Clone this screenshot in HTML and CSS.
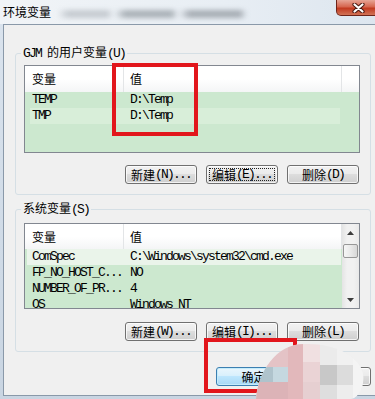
FILE: index.html
```html
<!DOCTYPE html>
<html>
<head>
    <title>环境变量</title>
    <link rel="stylesheet" href="styles.css">
</head>
<body>
    <div class="titlebar">
        <span class="title zh">环境变量</span>
        <div class="title-blur"></div>
        <div class="close">
            <svg width="13" height="10" viewBox="0 0 13 10">
                <path d="M2.5 1.5 L10.5 8.5 M10.5 1.5 L2.5 8.5" stroke="#4a1a12" stroke-width="4.2" stroke-linecap="round"/>
                <path d="M2.5 1.5 L10.5 8.5 M10.5 1.5 L2.5 8.5" stroke="#fff" stroke-width="2.2" stroke-linecap="round"/>
            </svg>
        </div>
    </div>

    <div class="dialog">
        <fieldset class="group group-user">
            <legend>GJM <span class="zh">的用户变量</span>(U)</legend>
            <div class="list list-user">
                <div class="list-main">
                    <div class="list-head">
                        <div class="head-cell cell-name zh">变量</div>
                        <div class="head-cell cell-value zh">值</div>
                        <div class="head-rest"></div>
                    </div>
                    <div class="row"><span class="cell-name">TEMP</span><span class="cell-value">D:\Temp</span></div>
                    <div class="row row-hot"><span class="cell-name">TMP</span><span class="cell-value">D:\Temp</span></div>
                </div>
            </div>
            <div class="btn-row">
                <button class="btn"><span class="zh">新建</span>(N)...</button>
                <button class="btn btn-focus"><span class="zh">编辑</span>(E)...</button>
                <button class="btn"><span class="zh">删除</span>(D)</button>
            </div>
        </fieldset>

        <fieldset class="group group-system">
            <legend><span class="zh">系统变量</span>(S)</legend>
            <div class="list list-system">
                <div class="list-main">
                    <div class="list-head">
                        <div class="head-cell cell-name zh">变量</div>
                        <div class="head-cell cell-value zh">值</div>
                    </div>
                    <div class="row row-light"><span class="cell-name">ComSpec</span><span class="cell-value">C:\Windows\system32\cmd.exe</span></div>
                    <div class="row"><span class="cell-name">FP_NO_HOST_C...</span><span class="cell-value">NO</span></div>
                    <div class="row"><span class="cell-name">NUMBER_OF_PR...</span><span class="cell-value">4</span></div>
                    <div class="row"><span class="cell-name">OS</span><span class="cell-value">Windows_NT</span></div>
                </div>
                <div class="scroll">
                    <div class="arrow">
                        <svg width="7" height="4" viewBox="0 0 7 4"><path d="M0 4 L3.5 0 L7 4 Z" fill="#3c3c3c"/></svg>
                    </div>
                    <div class="thumb"></div>
                    <div class="track"></div>
                    <div class="arrow">
                        <svg width="7" height="4" viewBox="0 0 7 4"><path d="M0 0 L3.5 4 L7 0 Z" fill="#3c3c3c"/></svg>
                    </div>
                </div>
            </div>
            <div class="btn-row">
                <button class="btn"><span class="zh">新建</span>(W)...</button>
                <button class="btn"><span class="zh">编辑</span>(I)...</button>
                <button class="btn"><span class="zh">删除</span>(L)</button>
            </div>
        </fieldset>

        <div class="foot">
            <button class="btn btn-wide btn-default"><span class="zh">确定</span></button>
            <button class="btn btn-wide"><span class="zh">取消</span></button>
        </div>
    </div>

    <div class="mark mark-value"></div>
    <div class="mark mark-ok"></div>

    <svg class="smudge" width="118" height="57" viewBox="0 0 118 57">
        <defs>
            <clipPath id="blob">
                <path d="M4 57 C6 30 24 2 52 2 C82 1 108 14 111 32 C113 48 104 57 98 57 Z"/>
            </clipPath>
        </defs>
        <g clip-path="url(#blob)">
            <rect x="0" y="0" width="118" height="57" fill="#ededed"/>
            <rect x="0" y="0" width="36" height="25" fill="#e4c3c6"/>
            <rect x="5" y="25" width="16" height="15" fill="#afc3cc"/>
            <rect x="21" y="25" width="15" height="15" fill="#c5d8e0"/>
            <rect x="0" y="40" width="36" height="17" fill="#dcb3b7"/>
            <rect x="36" y="0" width="15" height="57" fill="#e2b8bb"/>
            <rect x="51" y="0" width="17" height="20" fill="#f0e0e1"/>
            <rect x="51" y="20" width="17" height="20" fill="#ead3d5"/>
            <rect x="51" y="40" width="17" height="17" fill="#e6cfd1"/>
            <rect x="68" y="0" width="17" height="23" fill="#ebebeb"/>
            <rect x="68" y="23" width="17" height="20" fill="#c8c8c8"/>
            <rect x="68" y="43" width="17" height="14" fill="#dedede"/>
            <rect x="85" y="0" width="16" height="23" fill="#f1f1f1"/>
            <rect x="85" y="23" width="16" height="20" fill="#dcdcdc"/>
            <rect x="101" y="0" width="17" height="57" fill="#f4f4f4"/>
        </g>
    </svg>
</body>
</html>
```

FILE: styles.css
```css
* {
    box-sizing: border-box;
}

body {
    margin: 0;
    width: 375px;
    height: 399px;
    overflow: hidden;
    position: relative;
    background: linear-gradient(#dbe4ee, #c9d5e2);
    font: 13px/14px "Liberation Mono", "Noto Sans CJK SC", monospace;
    letter-spacing: -1.8px;
    color: #000;
}

.zh {
    font-family: "Noto Sans CJK SC", sans-serif;
    font-size: 12px;
    letter-spacing: 0;
}

/* title bar */
.titlebar {
    height: 24px;
    display: flex;
    align-items: flex-start;
    background: linear-gradient(to right, #f1f4f7, #e8eef4 60%, #dde6ef);
}

.title {
    padding: 5px 0 0 3px;
}

.title-blur {
    width: 190px;
    height: 8px;
    margin: 10px 0 0 6px;
    background: linear-gradient(to right, transparent 0, #b5bbc1 6%, #b5bbc1 26%, transparent 30%, #8f979e 36%, #8f979e 60%, transparent 64%, #8c939a 70%, #8c939a 96%, transparent 100%);
    filter: blur(2.5px);
    opacity: .7;
}

.close {
    margin-left: auto;
    margin-right: -5px;
    width: 44px;
    height: 16px;
    border: 1px solid #6e2419;
    border-top: 0;
    border-radius: 0 0 5px 5px;
    background: linear-gradient(#e7a596, #d6664f 45%, #c23a20 55%, #d17356);
    display: flex;
    align-items: center;
    justify-content: center;
}

/* dialog body */
.dialog {
    margin-left: 3px;
    height: 372px;
    border-left: 1px solid #8a99a9;
    border-top: 1px solid #8a99a9;
    border-bottom: 1px solid #8a99a9;
    background: #f0f0f0;
}

.group {
    margin: 20px 0 0 11px;
    width: 356px;
    min-width: 0;
    padding: 0 10px 10px 8px;
    border: 1px solid #d5dfe5;
    border-radius: 3px;
}

.group-system {
    margin-top: 6px;
}

.group legend {
    margin-left: -3px;
    padding: 0 2px;
    line-height: 14px;
}

.list {
    display: flex;
    margin-top: 4px;
    height: 88px;
    border: 1px solid #828790;
    background: #cce8cf;
    overflow: hidden;
}

.list-system {
    margin-top: 6px;
    height: 86px;
}

.list-main {
    flex: 1;
    display: flex;
    flex-direction: column;
}

.list-head {
    display: flex;
    height: 26px;
    flex-shrink: 0;
    background: linear-gradient(#fff 50%, #f4f5f6);
}

.list-system .list-head {
    height: 25px;
}

.head-cell {
    display: flex;
    align-items: center;
    border-right: 1px solid #e3e5e7;
}

.head-rest {
    flex: 1;
}

.cell-name {
    width: 99px;
    padding-left: 7px;
    flex-shrink: 0;
}

.cell-value {
    width: 218px;
    padding-left: 6px;
    flex-shrink: 0;
}

.row {
    display: flex;
    align-items: center;
    height: 16px;
    flex-shrink: 0;
}

.row-hot {
    background: linear-gradient(to right, transparent 5px, #d8eed9 5px, #d8eed9 315px, transparent 315px);
}

.row-light {
    background: linear-gradient(to right, transparent 2px, #eaf4ea 2px, #eaf4ea 316px, transparent 316px);
}

/* scrollbar */
.scroll {
    width: 17px;
    display: flex;
    flex-direction: column;
    background: linear-gradient(to right, #e4e4e4, #f1f1f1 30%, #f1f1f1 70%, #e9e9e9);
}

.arrow {
    height: 17px;
    display: flex;
    align-items: center;
    justify-content: center;
}

.thumb {
    margin: 3px 1px 0;
    height: 14px;
    border: 1px solid #979797;
    border-radius: 2px;
    background: linear-gradient(to right, #f6f6f6, #e9e9e9 50%, #d7d7d7);
}

.track {
    flex: 1;
}

/* buttons */
.btn-row {
    display: flex;
    justify-content: flex-end;
    gap: 9px;
    margin-top: 12px;
    padding-right: 1px;
}

.list-system + .btn-row {
    margin-top: 13px;
}

.btn {
    position: relative;
    width: 72px;
    height: 19px;
    padding: 0;
    border: 1px solid #707070;
    border-radius: 3px;
    background: linear-gradient(#f2f2f2, #ebebeb 45%, #dddddd 50%, #cfcfcf);
    box-shadow: inset 0 0 0 1px rgba(255, 255, 255, .75);
    font: inherit;
    letter-spacing: inherit;
    color: #000;
    display: flex;
    align-items: center;
    justify-content: center;
}

.btn-focus::after {
    content: "";
    position: absolute;
    inset: 2px;
    border: 1px dotted #222;
}

.foot {
    display: flex;
    justify-content: flex-end;
    gap: 5px;
    margin-top: 15px;
    padding-right: 4px;
}

.btn-wide {
    width: 75px;
}

.btn-default {
    border-color: #3c7fb1;
    background: linear-gradient(#eaf6fd, #d9f0fc 45%, #bee6fd 50%, #a7d9f5);
    box-shadow: inset 0 0 0 1px #c4ecfb;
}

/* red annotation boxes and smudge lie over the dialog */
.mark {
    position: absolute;
    border: 4px solid #e2161c;
}

.mark-value {
    left: 112px;
    top: 63px;
    width: 86px;
    height: 73px;
}

.mark-ok {
    left: 204px;
    top: 338px;
    width: 93px;
    height: 55px;
}

.smudge {
    position: absolute;
    left: 252px;
    top: 342px;
}
```
